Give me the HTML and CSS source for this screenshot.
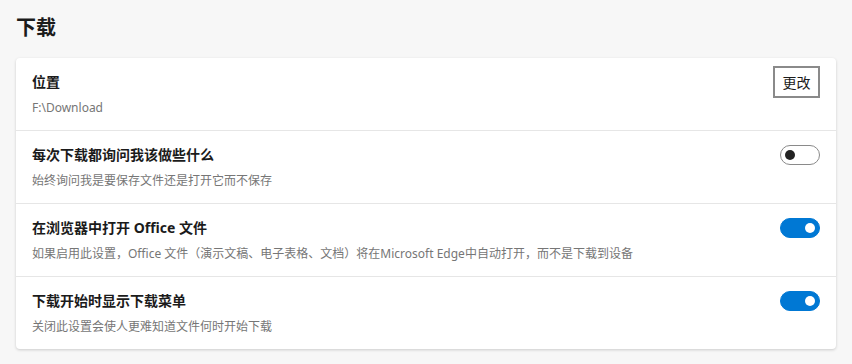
FILE: index.html
```html
<!DOCTYPE html>
<html lang="zh-CN">
<head>
    <meta charset="UTF-8">
    <title>下载</title>
    <meta name="viewport" content="width=device-width, initial-scale=1.0">
    <link rel="stylesheet" href="styles.css">
</head>
<body>
<main class="page">
    <h1 class="page-title">下载</h1>

    <section class="card">
        <!-- Download location -->
        <div class="row">
            <div class="row-text">
                <div class="row-title">位置</div>
                <div class="row-sub">F:\Download</div>
            </div>
            <button class="btn" type="button">更改</button>
        </div>

        <div class="row">
            <div class="row-text">
                <div class="row-title">每次下载都询问我该做些什么</div>
                <div class="row-sub">始终询问我是要保存文件还是打开它而不保存</div>
            </div>
            <span class="toggle"></span>
        </div>

        <div class="row">
            <div class="row-text">
                <div class="row-title">在浏览器中打开 Office 文件</div>
                <div class="row-sub">如果启用此设置，Office 文件（演示文稿、电子表格、文档）将在Microsoft Edge中自动打开，而不是下载到设备</div>
            </div>
            <span class="toggle on"></span>
        </div>

        <div class="row">
            <div class="row-text">
                <div class="row-title">下载开始时显示下载菜单</div>
                <div class="row-sub">关闭此设置会使人更难知道文件何时开始下载</div>
            </div>
            <span class="toggle on"></span>
        </div>
    </section>
</main>
</body>
</html>
```
FILE: styles.css
```css
body {
    margin: 0;
    background: #f7f7f7;
    font-family: "Noto Sans", "Noto Sans CJK SC", sans-serif;
    color: #1b1b1b;
}

.page {
    padding: 14px 16px 16px;
}

.page-title {
    margin: 0 0 16px;
    font-size: 20px;
    line-height: 28px;
    font-weight: 700;
}

/* Settings card */
.card {
    background: #fff;
    border-radius: 4px;
    box-shadow: 0 1px 3px rgba(0, 0, 0, 0.18);
}

.row {
    display: flex;
    align-items: flex-start;
    justify-content: space-between;
    height: 44px;
    padding: 14px 16px;
    border-top: 1px solid #e6e6e6;
}

.row:first-child {
    border-top: none;
}

.row-title {
    font-size: 14px;
    line-height: 20px;
    font-weight: 700;
}

.row-sub {
    margin-top: 8px;
    font-size: 12px;
    line-height: 16px;
    color: #767676;
}

.btn {
    margin-top: -6px;
    width: 47px;
    height: 32px;
    padding: 0;
    background: #fff;
    border: 2px solid #8a8a8a;
    font-family: inherit;
    font-size: 14px;
    color: #1b1b1b;
}

/* Toggle switch */
.toggle {
    position: relative;
    width: 40px;
    height: 20px;
    box-sizing: border-box;
    border: 1px solid #8a8a8a;
    border-radius: 10px;
    background: #fff;
}

.toggle::after {
    content: "";
    position: absolute;
    top: 4px;
    left: 4px;
    width: 10px;
    height: 10px;
    border-radius: 50%;
    background: #222;
}

.toggle.on {
    background: #0078d4;
    border-color: #0078d4;
}

.toggle.on::after {
    left: auto;
    right: 4px;
    background: #fff;
}
```
